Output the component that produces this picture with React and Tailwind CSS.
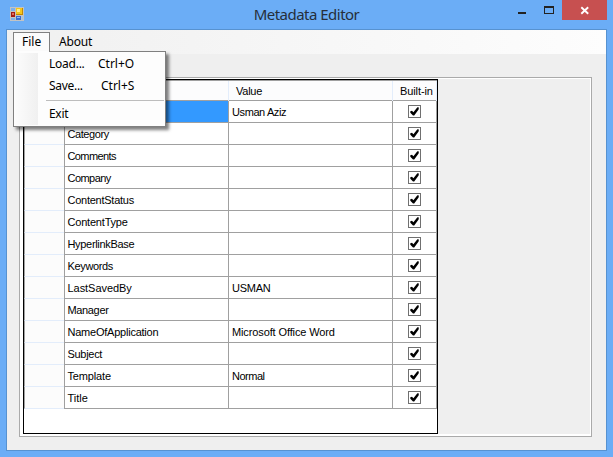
const rows = [
  { name: "", value: "Usman Aziz", track: "", valueTrack: "tracking-[-0.4px]" },
  { name: "Category", value: "", track: "tracking-[-0.42px]" },
  { name: "Comments", value: "", track: "tracking-[-0.6px]" },
  { name: "Company", value: "", track: "tracking-[-0.55px]" },
  { name: "ContentStatus", value: "", track: "tracking-[-0.25px]" },
  { name: "ContentType", value: "", track: "tracking-[-0.2px]" },
  { name: "HyperlinkBase", value: "", track: "tracking-[-0.32px]" },
  { name: "Keywords", value: "", track: "tracking-[-0.35px]" },
  { name: "LastSavedBy", value: "USMAN", track: "tracking-[-0.05px]", valueTrack: "tracking-[-0.25px]" },
  { name: "Manager", value: "", track: "tracking-[-0.35px]" },
  { name: "NameOfApplication", value: "Microsoft Office Word", track: "tracking-[-0.23px]", valueTrack: "tracking-[-0.12px]" },
  { name: "Subject", value: "", track: "tracking-[-0.3px]" },
  { name: "Template", value: "Normal", track: "tracking-[-0.15px]", valueTrack: "tracking-[-0.5px]" },
  { name: "Title", value: "", track: "tracking-[0px]" },
];

const columns = "grid grid-cols-[40px_1px_163px_1px_163px_1px_43px_1px]";

function AppIcon() {
  return (
    <svg width="14" height="14" viewBox="0 0 14 14" shapeRendering="crispEdges">
      <rect width="14" height="14" fill="#c3c3c3" />
      <rect x="1" y="1" width="4" height="3" fill="#7db1ea" />
      <rect x="1" y="11" width="4" height="2" fill="#7db1ea" />
      <rect x="12" y="9" width="1" height="4" fill="#9cc3ee" />
      <rect x="1" y="5" width="4" height="5" fill="#a51d12" />
      <rect x="2" y="6" width="2" height="2" fill="#e0705c" />
      <rect x="6" y="1" width="7" height="7" fill="#c28a00" />
      <rect x="6" y="1" width="6" height="6" fill="#f5c51c" />
      <rect x="7" y="2" width="3" height="3" fill="#ffeb8b" />
      <rect x="6" y="9" width="5" height="4" fill="#3a6fce" />
      <rect x="7" y="10" width="3" height="1" fill="#95bdf5" />
    </svg>
  );
}

function CheckBox() {
  return (
    <svg width="13" height="13" viewBox="0 0 13 13">
      <rect x="0.5" y="0.5" width="12" height="12" fill="#fff" stroke="#707070" />
      <path d="M2.3 6.2 L4 5.7 L5.4 7.2 L9.4 2.3 L10.9 2.5 L10.6 4.4 L6.2 10.6 L5 10.6 L2.3 7.8 Z" fill="#000" />
    </svg>
  );
}

function TitleBar() {
  return (
    <header className="relative flex h-[29px] items-start">
      <div className="pt-[7px] pl-[10px]">
        <AppIcon />
      </div>
      <h1 className="absolute inset-x-0 top-[3px] text-center text-[15px] leading-[22px] tracking-[-0.52px] text-[#262f3b]">
        Metadata Editor
      </h1>
      <div className="ml-auto flex pr-[6px]">
        <svg width="45" height="20" viewBox="0 0 45 20" shapeRendering="crispEdges">
          <rect x="1" y="12" width="8" height="2" fill="#222" />
          <path d="M27 6h10v8h-10z M28 8v5h8v-5z" fill="#222" fillRule="evenodd" />
        </svg>
        <div className="h-[20px] w-[45px] bg-[#c75050]">
          <svg width="45" height="20" viewBox="0 0 45 20">
            <path d="M19.3 7.3 L26.2 13.7 M26.2 7.3 L19.3 13.7" stroke="#fff" strokeWidth="1.9" />
          </svg>
        </div>
      </div>
    </header>
  );
}

function FileMenu() {
  return (
    <div className="absolute top-[18px] left-[-1px] z-10 h-[76px] w-[153px] border border-[#808080] bg-[#fdfdfd] p-px shadow-[3px_3px_3px_rgba(0,0,0,0.5)]">
      <div className="absolute top-[-1px] left-0 h-px w-[35px] bg-[#fdfdfd]" />
      <div className="flex h-full">
        <div className="w-[23px] bg-linear-to-r from-[#fcfcfc] to-[#f0f0f0]" />
        <div className="flex-1">
          <div className="flex h-[22px] pl-[11px] leading-[21px]">
            <span className="w-[49px] tracking-[-0.25px]">Load...</span>
            <span>Ctrl+O</span>
          </div>
          <div className="flex h-[22px] pl-[11px] leading-[21px]">
            <span className="w-[52px] tracking-[-0.3px]">Save...</span>
            <span>Ctrl+S</span>
          </div>
          <div className="mt-[3px] ml-[8px] h-px bg-[#bdbdbd]" />
          <div className="h-[22px] pt-[2px] pl-[11px] leading-[22px] tracking-[-0.3px]">Exit</div>
        </div>
      </div>
    </div>
  );
}

function MenuBar() {
  return (
    <nav className="flex h-[24px] bg-linear-to-r from-[#f0f0f0] to-[#fdfdfd] pt-[2px] pl-[6px] text-[12px] leading-[20px] text-black">
      <div className="relative h-[20px] w-[37px] border-x border-t border-[#808080] bg-[#fbfbfb] pl-[8px] leading-[18px]">
        File
        <FileMenu />
      </div>
      <div className="pl-[9px] tracking-[-0.2px]">About</div>
    </nav>
  );
}

function HeaderRow() {
  return (
    <div className={columns + " h-[20px] bg-[#fcfcfd] leading-[20px]"}>
      <div />
      <div className="bg-[#e3edfb]" />
      <div />
      <div className="bg-[#e3edfb]" />
      <div className="pl-[7px] tracking-[-0.25px]">Value</div>
      <div className="bg-[#e3edfb]" />
      <div className="pl-[7px] tracking-[-0.1px] whitespace-nowrap">Built-in</div>
      <div className="bg-[#e3edfb]" />
    </div>
  );
}

function Row({ row, selected }) {
  const line = "border-b border-[#a0a0a0]";
  return (
    <div className={columns + " h-[22px] leading-[23px]"}>
      <div className="border-b border-l border-b-[#e3edfb] border-l-[#a0a0a0] bg-[#fcfcfc]" />
      <div className="bg-[#a0a0a0]" />
      <div className={(selected ? "bg-[#3399ff] " : "bg-white ") + line + " h-[22px] pl-[2.5px] " + row.track}>
        {row.name}
      </div>
      <div className="bg-[#a0a0a0]" />
      <div className={line + " h-[22px] bg-white pl-[3px] " + (row.valueTrack || "")}>{row.value}</div>
      <div className="bg-[#a0a0a0]" />
      <div className={line + " flex h-[22px] items-center justify-center bg-white"}>
        <CheckBox />
      </div>
      <div className="bg-[#a0a0a0]" />
    </div>
  );
}

export default function App() {
  return (
    <div className="flex h-[457px] w-[613px] flex-col overflow-hidden bg-[#6badf6] font-['Noto_Sans','Open_Sans',sans-serif]">
      <TitleBar />
      <main className="ml-[6px] h-[422px] w-[601px] border border-[#5792d0] bg-[#efefef]">
        <MenuBar />
        <section className="mt-[23px] ml-[12px] h-[360px] w-[573px] border border-[#aaaaaa] bg-white pt-px pr-px pb-[2px] pl-[3px]">
          <div className="h-full bg-[#efefef]">
            <div className="h-[355px] w-[415px] border border-black bg-white font-['Liberation_Sans',Arial,sans-serif] text-[11px] text-black">
              <div className="h-px bg-[#a0a0a0]" />
              <HeaderRow />
              <div className="-mt-px h-px bg-[#a0a0a0]" />
              {rows.map((row, i) => (
                <Row key={i} row={row} selected={i === 0} />
              ))}
            </div>
          </div>
        </section>
      </main>
    </div>
  );
}
